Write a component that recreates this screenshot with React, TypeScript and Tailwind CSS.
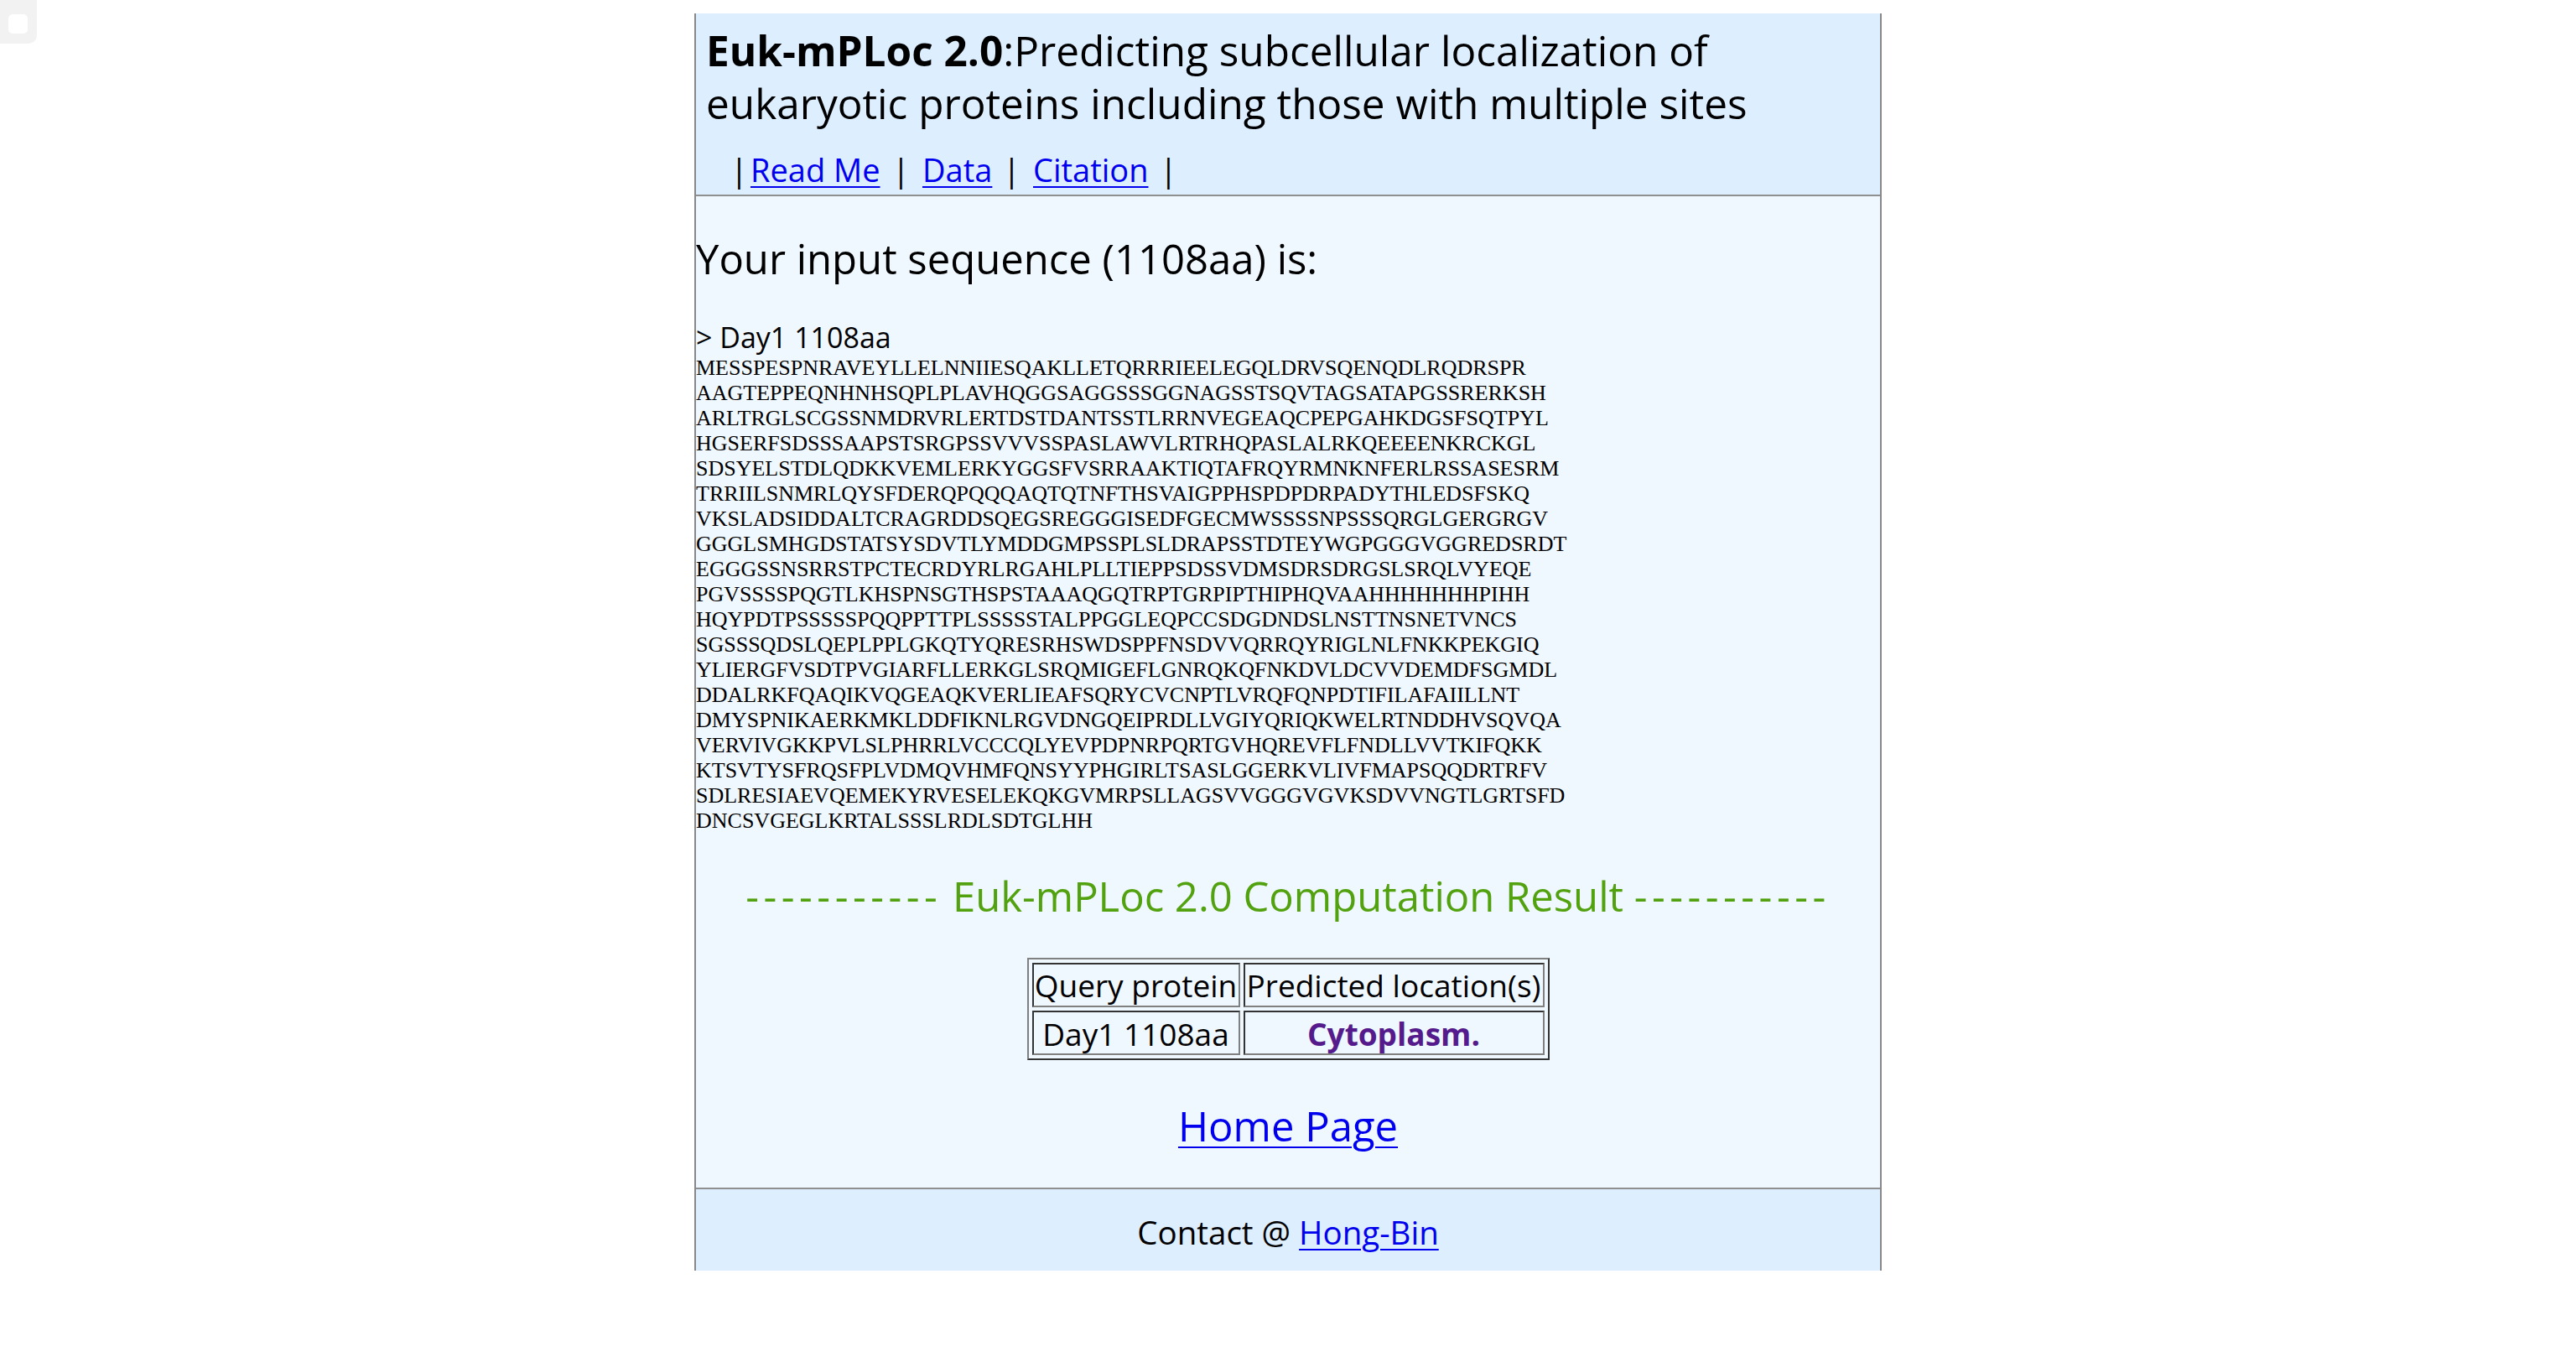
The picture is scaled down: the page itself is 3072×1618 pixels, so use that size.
import React from "react";

const SEQ = [
  "MESSPESPNRAVEYLLELNNIIESQAKLLETQRRRIEELEGQLDRVSQENQDLRQDRSPR",
  "AAGTEPPEQNHNHSQPLPLAVHQGGSAGGSSSGGNAGSSTSQVTAGSATAPGSSRERKSH",
  "ARLTRGLSCGSSNMDRVRLERTDSTDANTSSTLRRNVEGEAQCPEPGAHKDGSFSQTPYL",
  "HGSERFSDSSSAAPSTSRGPSSVVVSSPASLAWVLRTRHQPASLALRKQEEEENKRCKGL",
  "SDSYELSTDLQDKKVEMLERKYGGSFVSRRAAKTIQTAFRQYRMNKNFERLRSSASESRM",
  "TRRIILSNMRLQYSFDERQPQQQAQTQTNFTHSVAIGPPHSPDPDRPADYTHLEDSFSKQ",
  "VKSLADSIDDALTCRAGRDDSQEGSREGGGISEDFGECMWSSSSNPSSSQRGLGERGRGV",
  "GGGLSMHGDSTATSYSDVTLYMDDGMPSSPLSLDRAPSSTDTEYWGPGGGVGGREDSRDT",
  "EGGGSSNSRRSTPCTECRDYRLRGAHLPLLTIEPPSDSSVDMSDRSDRGSLSRQLVYEQE",
  "PGVSSSSPQGTLKHSPNSGTHSPSTAAAQGQTRPTGRPIPTHIPHQVAAHHHHHHHPIHH",
  "HQYPDTPSSSSSPQQPPTTPLSSSSSTALPPGGLEQPCCSDGDNDSLNSTTNSNETVNCS",
  "SGSSSQDSLQEPLPPLGKQTYQRESRHSWDSPPFNSDVVQRRQYRIGLNLFNKKPEKGIQ",
  "YLIERGFVSDTPVGIARFLLERKGLSRQMIGEFLGNRQKQFNKDVLDCVVDEMDFSGMDL",
  "DDALRKFQAQIKVQGEAQKVERLIEAFSQRYCVCNPTLVRQFQNPDTIFILAFAIILLNT",
  "DMYSPNIKAERKMKLDDFIKNLRGVDNGQEIPRDLLVGIYQRIQKWELRTNDDHVSQVQA",
  "VERVIVGKKPVLSLPHRRLVCCCQLYEVPDPNRPQRTGVHQREVFLFNDLLVVTKIFQKK",
  "KTSVTYSFRQSFPLVDMQVHMFQNSYYPHGIRLTSASLGGERKVLIVFMAPSQQDRTRFV",
  "SDLRESIAEVQEMEKYRVESELEKQKGVMRPSLLAGSVVGGGVGVKSDVVNGTLGRTSFD",
  "DNCSVGEGLKRTALSSSLRDLSDTGLHH",
];

function Bar() {
  return <span className="inline-block w-[20px] text-center text-black">|</span>;
}

export default function App() {
  return (
    <div className="relative min-h-[1618px] bg-white font-['Open_Sans',sans-serif] text-black">
      {/* top-left placeholder */}
      <div className="absolute left-0 top-0 flex h-[52px] w-[44px] items-start justify-center rounded-br-[10px] bg-[#f2f2f2] pt-[17px]">
        <div className="ml-[-2px] h-[23px] w-[23px] rounded-[5px] bg-white" />
      </div>

      <div className="pt-[16px]">
        <div className="mx-auto w-[1416px] border-x-2 border-[#888888]">
          {/* header */}
          <div className="border-b-2 border-[#8f8f8f] bg-[#ddeeff] pb-[5px] pl-[12px] pt-[13px]">
            <div className="text-[49.5px] leading-[63px]">
              <div>
                <span className="font-bold">Euk-mPLoc 2.0</span>:Predicting subcellular localization of
              </div>
              <div>eukaryotic proteins including those with multiple sites</div>
            </div>
            <div className="mt-[22px] flex items-baseline whitespace-nowrap pl-[29px] text-[38px] leading-[50px]">
              <Bar />
              <a href="#" className="ml-[4px] w-[153px] text-[#0000ee] underline decoration-[2px] underline-offset-[5px]">
                Read Me
              </a>
              <span className="ml-[16px]"><Bar /></span>
              <a href="#" className="ml-[16px] w-[78px] text-[#0000ee] underline decoration-[2px] underline-offset-[5px]">
                Data
              </a>
              <span className="ml-[18px]"><Bar /></span>
              <a href="#" className="ml-[16px] w-[135px] text-[#0000ee] underline decoration-[2px] underline-offset-[5px]">
                Citation
              </a>
              <span className="ml-[16px]"><Bar /></span>
            </div>
          </div>

          {/* main */}
          <div className="bg-[#f0f8ff] pb-[44px] pt-[43px]">
            <div className="text-[49px] leading-[63px]">Your input sequence (1108aa) is:</div>
            <div className="mt-[42px] text-[34px] leading-[40px]">&gt; Day1 1108aa</div>
            <div className="mt-[2px] font-['Liberation_Serif',serif] text-[26px] leading-[30px]">
              {SEQ.map((s, i) => (
                <div key={i}>{s}</div>
              ))}
            </div>

            <div className="mt-[44px] whitespace-nowrap text-center text-[49px] leading-[60px] text-[#52a20f]">
              <span className="tracking-[5.5px]">-----------</span> Euk-mPLoc 2.0 Computation Result{" "}
              <span className="tracking-[5.5px]">-----------</span>
            </div>

            <div className="mx-auto mt-[44px] flex w-[623px] flex-col gap-[4px] border-2 border-b-[#333333] border-l-[#808080] border-r-[#333333] border-t-[#808080] p-[4px] text-[37px]">
              <div className="flex gap-[4px]">
                <div className="flex h-[53px] w-[248px] items-center justify-center whitespace-nowrap border-2 border-b-[#808080] border-l-[#333333] border-r-[#808080] border-t-[#333333]">
                  Query protein
                </div>
                <div className="flex h-[53px] w-[359px] items-center justify-center whitespace-nowrap border-2 border-b-[#808080] border-l-[#333333] border-r-[#808080] border-t-[#333333]">
                  Predicted location(s)
                </div>
              </div>
              <div className="flex gap-[4px]">
                <div className="flex h-[53px] w-[248px] items-center justify-center whitespace-nowrap border-2 border-b-[#808080] border-l-[#333333] border-r-[#808080] border-t-[#333333] pt-[2px]">
                  Day1 1108aa
                </div>
                <div className="flex h-[53px] w-[359px] items-center justify-center whitespace-nowrap border-2 border-b-[#808080] border-l-[#333333] border-r-[#808080] border-t-[#333333] pt-[2px] font-bold text-[#551a8b]">
                  Cytoplasm.
                </div>
              </div>
            </div>

            <div className="mt-[48px] text-center text-[49px] leading-[60px]">
              <a href="#" className="text-[#0000ee] underline decoration-[2px] underline-offset-[6px]">
                Home Page
              </a>
            </div>
          </div>

          {/* footer */}
          <div className="border-t-2 border-[#8f8f8f] bg-[#ddeeff] pb-[22px] pt-[27px] text-center text-[38.5px] leading-[48px]">
            Contact @{" "}
            <a href="#" className="text-[#0000ee] underline decoration-[2px] underline-offset-[5px]">
              Hong-Bin
            </a>
          </div>
        </div>
      </div>
    </div>
  );
}
